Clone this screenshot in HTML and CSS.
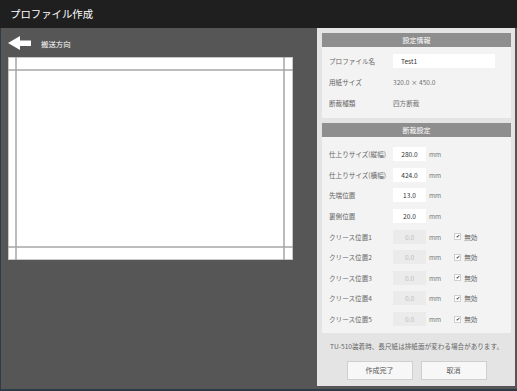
FILE: index.html
```html
<!DOCTYPE html>
<html lang="ja">
<head>
    <meta charset="UTF-8">
    <title>プロファイル作成</title>
    <link rel="stylesheet" href="styles.css">
</head>
<body>
    <div class="titlebar">プロファイル作成</div>

    <div class="main">
        <div class="preview">
            <div class="direction">
                <svg class="arrow" width="23" height="14" viewBox="0 0 23 14">
                    <polygon points="0,7 12,0 12,4.5 23,4.5 23,10 12,10 12,14" fill="#fff"/>
                </svg>
                <span>搬送方向</span>
            </div>
            <svg class="paper" width="285" height="203" viewBox="0 0 285 203">
                <rect x="0.5" y="0.5" width="284" height="202" fill="#fff" stroke="#c8c8c8"/>
                <line x1="8" y1="0" x2="8" y2="203" stroke="#a6a6a6" stroke-width="1.5"/>
                <line x1="276" y1="0" x2="276" y2="203" stroke="#a6a6a6" stroke-width="1.5"/>
                <line x1="0" y1="13" x2="285" y2="13" stroke="#a6a6a6" stroke-width="1.5"/>
                <line x1="0" y1="190" x2="285" y2="190" stroke="#a6a6a6" stroke-width="1.5"/>
            </svg>
        </div>

        <div class="side">
            <div class="section">
                <div class="section-title">設定情報</div>
                <div class="section-body info">
                    <div class="row">
                        <span class="label">プロファイル名</span>
                        <span class="field wide">Test1</span>
                    </div>
                    <div class="row">
                        <span class="label">用紙サイズ</span>
                        <span class="value">320.0 × 450.0</span>
                    </div>
                    <div class="row">
                        <span class="label">断裁種類</span>
                        <span class="value">四方断裁</span>
                    </div>
                </div>
            </div>

            <div class="section">
                <div class="section-title">断裁設定</div>
                <div class="section-body cut">
                    <div class="row">
                        <span class="label">仕上りサイズ(縦幅)</span>
                        <span class="field num">280.0</span>
                        <span class="unit">mm</span>
                    </div>
                    <div class="row">
                        <span class="label">仕上りサイズ(横幅)</span>
                        <span class="field num">424.0</span>
                        <span class="unit">mm</span>
                    </div>
                    <div class="row">
                        <span class="label">先端位置</span>
                        <span class="field num">13.0</span>
                        <span class="unit">mm</span>
                    </div>
                    <div class="row">
                        <span class="label">裏側位置</span>
                        <span class="field num">20.0</span>
                        <span class="unit">mm</span>
                    </div>
                    <div class="row">
                        <span class="label">クリース位置1</span>
                        <span class="field num disabled">0.0</span>
                        <span class="unit">mm</span>
                        <span class="check">✔</span><span class="check-label">無効</span>
                    </div>
                    <div class="row">
                        <span class="label">クリース位置2</span>
                        <span class="field num disabled">0.0</span>
                        <span class="unit">mm</span>
                        <span class="check">✔</span><span class="check-label">無効</span>
                    </div>
                    <div class="row">
                        <span class="label">クリース位置3</span>
                        <span class="field num disabled">0.0</span>
                        <span class="unit">mm</span>
                        <span class="check">✔</span><span class="check-label">無効</span>
                    </div>
                    <div class="row">
                        <span class="label">クリース位置4</span>
                        <span class="field num disabled">0.0</span>
                        <span class="unit">mm</span>
                        <span class="check">✔</span><span class="check-label">無効</span>
                    </div>
                    <div class="row">
                        <span class="label">クリース位置5</span>
                        <span class="field num disabled">0.0</span>
                        <span class="unit">mm</span>
                        <span class="check">✔</span><span class="check-label">無効</span>
                    </div>
                </div>
            </div>

            <div class="note">TU-510装着時、長尺紙は排紙面が変わる場合があります。</div>

            <div class="buttons">
                <div class="button">作成完了</div>
                <div class="button">取消</div>
            </div>
        </div>
    </div>
</body>
</html>
```

FILE: styles.css
```css
* {
    margin: 0;
    padding: 0;
    box-sizing: border-box;
    font-family: "Noto Sans CJK JP", "Noto Sans", sans-serif;
}

body {
    width: 517px;
    height: 391px;
    overflow: hidden;
    background: #2e3b47;
}

.titlebar {
    height: 28px;
    background: #1f1f1f;
    color: #fff;
    font-size: 10.4px;
    line-height: 28px;
    padding-left: 10px;
}

.main {
    height: 361px;
    display: flex;
    background: #565656;
    margin-left: 1px;
}

.preview {
    flex: 1;
    padding: 8px 0 0 7px;
}

.direction {
    display: flex;
    align-items: center;
    height: 14px;
    margin-bottom: 7px;
    color: #fff;
    font-size: 7.4px;
}

.arrow {
    margin-right: 10px;
}

.paper {
    display: block;
}

.side {
    width: 198px;
    height: 358px;
    margin-right: 2px;
    background: #e4e4e4;
    padding: 5px 4px 0 5px;
}

.section {
    background: #f3f3f3;
    margin-bottom: 5px;
}

.section-title {
    height: 14px;
    line-height: 14px;
    background: #8e8e8e;
    color: #fff;
    font-size: 7px;
    text-align: center;
}

.section-body.info {
    padding: 3px 0 5px 7px;
}

.section-body.info .row {
    height: 21px;
}

.section-body.cut {
    padding: 7px 0 4px 7px;
}

.section-body.cut .row {
    height: 20.6px;
}

.row {
    display: flex;
    align-items: center;
    font-size: 6.6px;
}

.label {
    width: 64px;
    color: #666;
}

.value {
    color: #707070;
}

.field {
    height: 14px;
    line-height: 14px;
    background: #fff;
    color: #333;
}

.field.wide {
    width: 102px;
    padding-left: 8px;
}

.field.num {
    width: 33px;
    text-align: center;
}

.field.disabled {
    background: #ebebeb;
    color: #bdbdbd;
}

.unit {
    margin-left: 3px;
    color: #777;
}

.check {
    width: 7px;
    height: 7px;
    margin-left: 13px;
    background: #fff;
    border: 1px solid #cfcfcf;
    color: #333;
    font-size: 4.5px;
    line-height: 5px;
    text-align: center;
}

.check-label {
    margin-left: 3px;
    color: #666;
}

.note {
    font-size: 6.6px;
    color: #666;
    text-align: center;
    margin-top: 8px;
    height: 12px;
}

.buttons {
    display: flex;
    justify-content: center;
    gap: 8px;
    margin-top: 8px;
}

.button {
    width: 66px;
    height: 19px;
    line-height: 17px;
    background: #f7f7f7;
    border: 1px solid #cfcfcf;
    color: #555;
    font-size: 7px;
    text-align: center;
}
```
